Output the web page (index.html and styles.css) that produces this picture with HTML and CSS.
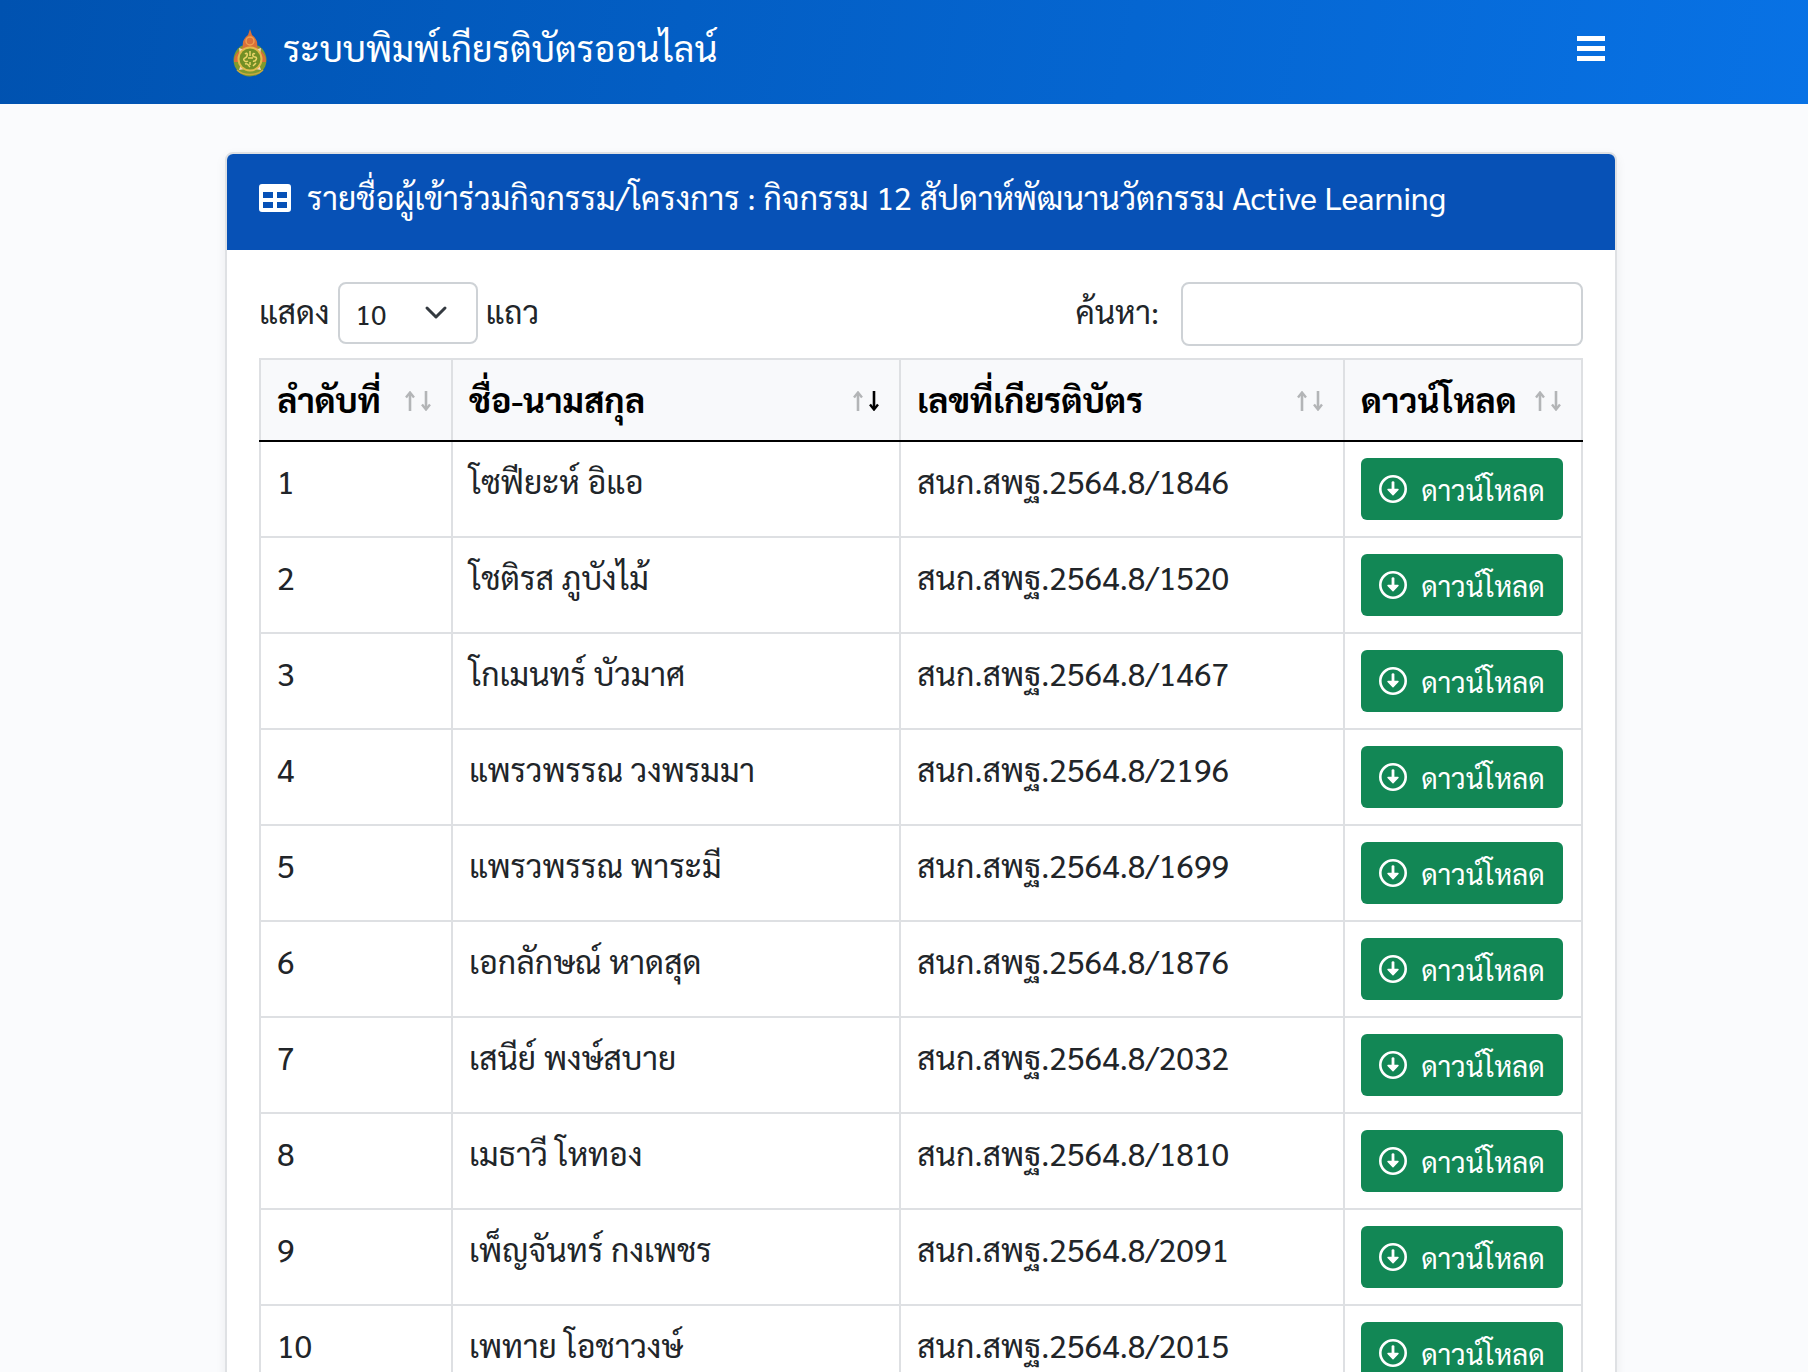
FILE: index.html
```
<!DOCTYPE html>
<html lang="th">
<head>
<meta charset="utf-8">
<meta name="viewport" content="width=device-width, initial-scale=1">
<title>ระบบพิมพ์เกียรติบัตรออนไลน์</title>
<link rel="stylesheet" href="styles.css">
</head>
<body>
<svg class="sprite" aria-hidden="true">
  <symbol id="up" viewBox="0 0 10 20"><path d="M5 20V3" fill="none" stroke="currentColor" stroke-width="2.6"/><path d="M1 6.5l4-5 4 5" fill="none" stroke="currentColor" stroke-width="2.4"/></symbol>
  <symbol id="down" viewBox="0 0 10 20"><path d="M5 0v17" fill="none" stroke="currentColor" stroke-width="2.6"/><path d="M1 13.5l4 5 4-5" fill="none" stroke="currentColor" stroke-width="2.4"/></symbol>
  <symbol id="circle-down" viewBox="0 0 28 28"><circle cx="14" cy="14" r="12.7" fill="none" stroke="currentColor" stroke-width="2.6"/><path d="M14 7.6V18" fill="none" stroke="currentColor" stroke-width="2.8" stroke-linecap="round"/><path d="M9 14.4h10l-5 5.4z" fill="currentColor" stroke="currentColor" stroke-width="1.4" stroke-linejoin="round"/></symbol>
</svg>
<header class="navbar">
  <div class="container navbar-inner">
    <a class="brand" href="#">
      <svg class="logo" viewBox="0 0 34 48" aria-hidden="true">
        <circle cx="17" cy="31" r="16.5" fill="#7f9a2f"/>
        <path d="M17 0l2 6c4 3 6 7 5 11 1 3 3 4 5 6 3 3 4 6 4 10H1c0-4 1-7 4-10 2-2 4-3 5-6-1-4 1-8 5-11z" fill="#d9703a"/>
        <circle cx="17" cy="12" r="4" fill="none" stroke="#f0a050" stroke-width="1.4"/>
        <path d="M6 19l6 2-5 5zM28 19l-6 2 5 5zM6 41l6-1-4-5zM28 41l-6-1 4-5z" fill="#f6d4bd"/>
        <circle cx="17" cy="30" r="12.5" fill="#e2bc4c"/>
        <circle cx="17" cy="30" r="10.5" fill="#728f25"/>
        <path d="M12 25c3-3 3 3 0 4s0 5 3 3M17 22v5M15 29h5M22 25c-3-2-3 3 0 3s1 5-2 4M12 35c3-1 3 1 5 3M17 33v3M20 37l3-3" fill="none" stroke="#ecd568" stroke-width="1.5"/>
        <path d="M4 41c6 6 20 6 26 0" fill="none" stroke="#c8a83d" stroke-width="1.5"/>
      </svg>
      <span>ระบบพิมพ์เกียรติบัตรออนไลน์</span>
    </a>
    <button class="menu" type="button" aria-label="เมนู">
      <svg viewBox="0 0 28 25" width="28" height="25"><path d="M0 0h28v5H0zM0 10h28v5H0zM0 20h28v5H0z" fill="currentColor"/></svg>
    </button>
  </div>
</header>
<main class="container">
  <section class="card">
    <h1 class="card-header">
      <svg class="table-icon" viewBox="0 0 32 28" aria-hidden="true"><path fill="currentColor" fill-rule="evenodd" d="M3 0h26a3 3 0 0 1 3 3v22a3 3 0 0 1-3 3H3a3 3 0 0 1-3-3V3a3 3 0 0 1 3-3zM4 8v6h10V8zM18 8v6h10V8zM4 18v6h10v-6zM18 18v6h10v-6z"/></svg>
      <span>รายชื่อผู้เข้าร่วมกิจกรรม/โครงการ : กิจกรรม 12 สัปดาห์พัฒนานวัตกรรม Active Learning</span>
    </h1>
    <div class="card-body">
      <div class="controls">
        <label class="length">แสดง
          <select class="select"><option>10</option><option>25</option><option>50</option><option>100</option></select>
          แถว</label>
        <label class="search">ค้นหา: <input class="input" type="search"></label>
      </div>
      <table class="table">
        <colgroup><col class="col-no"><col class="col-name"><col class="col-code"><col class="col-dl"></colgroup>
        <thead><tr>
          <th><div class="th"><span>ลำดับที่</span><span class="sort"><svg><use href="#up"/></svg><svg><use href="#down"/></svg></span></div></th>
          <th><div class="th"><span>ชื่อ-นามสกุล</span><span class="sort"><svg><use href="#up"/></svg><svg class="on"><use href="#down"/></svg></span></div></th>
          <th><div class="th"><span>เลขที่เกียรติบัตร</span><span class="sort"><svg><use href="#up"/></svg><svg><use href="#down"/></svg></span></div></th>
          <th><div class="th"><span>ดาวน์โหลด</span><span class="sort"><svg><use href="#up"/></svg><svg><use href="#down"/></svg></span></div></th>
        </tr></thead>
        <tbody>
          <tr><td>1</td><td>โซฟียะห์ อิแอ</td><td>สนก.สพฐ.2564.8/1846</td><td><button class="btn" type="button"><svg class="dl"><use href="#circle-down"/></svg>ดาวน์โหลด</button></td></tr>
          <tr><td>2</td><td>โชติรส ภูบังไม้</td><td>สนก.สพฐ.2564.8/1520</td><td><button class="btn" type="button"><svg class="dl"><use href="#circle-down"/></svg>ดาวน์โหลด</button></td></tr>
          <tr><td>3</td><td>โกเมนทร์ บัวมาศ</td><td>สนก.สพฐ.2564.8/1467</td><td><button class="btn" type="button"><svg class="dl"><use href="#circle-down"/></svg>ดาวน์โหลด</button></td></tr>
          <tr><td>4</td><td>แพรวพรรณ วงพรมมา</td><td>สนก.สพฐ.2564.8/2196</td><td><button class="btn" type="button"><svg class="dl"><use href="#circle-down"/></svg>ดาวน์โหลด</button></td></tr>
          <tr><td>5</td><td>แพรวพรรณ พาระมี</td><td>สนก.สพฐ.2564.8/1699</td><td><button class="btn" type="button"><svg class="dl"><use href="#circle-down"/></svg>ดาวน์โหลด</button></td></tr>
          <tr><td>6</td><td>เอกลักษณ์ หาดสุด</td><td>สนก.สพฐ.2564.8/1876</td><td><button class="btn" type="button"><svg class="dl"><use href="#circle-down"/></svg>ดาวน์โหลด</button></td></tr>
          <tr><td>7</td><td>เสนีย์ พงษ์สบาย</td><td>สนก.สพฐ.2564.8/2032</td><td><button class="btn" type="button"><svg class="dl"><use href="#circle-down"/></svg>ดาวน์โหลด</button></td></tr>
          <tr><td>8</td><td>เมธาวี โหทอง</td><td>สนก.สพฐ.2564.8/1810</td><td><button class="btn" type="button"><svg class="dl"><use href="#circle-down"/></svg>ดาวน์โหลด</button></td></tr>
          <tr><td>9</td><td>เพ็ญจันทร์ กงเพชร</td><td>สนก.สพฐ.2564.8/2091</td><td><button class="btn" type="button"><svg class="dl"><use href="#circle-down"/></svg>ดาวน์โหลด</button></td></tr>
          <tr><td>10</td><td>เพทาย โอชาวงษ์</td><td>สนก.สพฐ.2564.8/2015</td><td><button class="btn" type="button"><svg class="dl"><use href="#circle-down"/></svg>ดาวน์โหลด</button></td></tr>
        </tbody>
      </table>
    </div>
  </section>
</main>
</body>
</html>
```
FILE: styles.css
```
* { box-sizing: border-box; }
body {
  margin: 0;
  background: #fafbfd;
  color: #212529;
  font-family: Sarabun, "Noto Sans Thai Looped", "Noto Looped Thai", "Open Sans", "Noto Sans Thai", sans-serif;
  font-size: 32px;
  font-weight: 400;
  line-height: 46px;
}
.sprite { display: none; }
.navbar {
  height: 104px;
  background: linear-gradient(100deg, #0052b0, #0872e5);
  color: #fff;
  padding-left: 34px;
}
main { padding-left: 34px; }
.container { max-width: 1392px; margin: 0 auto; }
main.container { max-width: 1426px; margin-top: 48px; }
.navbar-inner { display: flex; justify-content: space-between; padding: 24px 12px 0 8px; }
.brand { display: flex; gap: 16px; color: inherit; text-decoration: none; font-size: 36px; }
.logo { width: 34px; height: 48px; margin-top: 5px; flex: none; }
.menu { height: 48px; border: 0; padding: 0; background: none; color: inherit; }
.menu svg { display: block; }
.card { background: #fff; border: 2px solid #dfe1e4; border-radius: 8px; box-shadow: 0 4px 12px rgba(0, 0, 0, .06); }
.card-header {
  display: flex;
  gap: 16px;
  margin: 0;
  padding: 20px 32px 30px;
  border-radius: 6px 6px 0 0;
  background: #0751b6;
  color: #fff;
  font-size: 32px;
  font-weight: 400;
  white-space: nowrap;
}
.table-icon { width: 32px; height: 28px; margin-top: 10px; flex: none; }
.card-body { padding: 32px; }
.controls { display: flex; justify-content: space-between; align-items: flex-start; margin-bottom: 12px; line-height: 58px; }
.length, .search { display: flex; align-items: flex-start; gap: 8px; }
.search { gap: 22px; }
.select {
  width: 140px;
  height: 62px;
  padding: 0 16px 4px;
  border: 2px solid #ced2d6;
  border-radius: 8px;
  appearance: none;
  color: inherit;
  font: inherit;
  font-size: 28px;
  background: #fff url("data:image/svg+xml,%3Csvg xmlns='http://www.w3.org/2000/svg' viewBox='0 0 24 16'%3E%3Cpath d='M3 3l9 9 9-9' fill='none' stroke='%23343a40' stroke-width='3' stroke-linecap='round' stroke-linejoin='round'/%3E%3C/svg%3E") no-repeat right 28px center / 24px 16px;
}
.input { width: 402px; height: 64px; border: 2px solid #ced2d6; border-radius: 8px; background: #fff; font: inherit; padding: 0 16px; }
.table { width: 100%; table-layout: fixed; border-collapse: collapse; }
.col-no { width: 192px; }
.col-name { width: 448px; }
.col-dl { width: 238px; }
.table th, .table td { border: 2px solid #dee0e3; padding: 16px; text-align: left; vertical-align: top; white-space: nowrap; }
.table th { padding-bottom: 18px; background: #f8f9fb; color: #000; font-size: 34px; font-weight: 700; border-bottom-color: #000; }
.th { display: flex; justify-content: space-between; align-items: center; }
.sort { display: flex; gap: 6px; color: #b3b5b7; margin: 4px 4px 0 0; }
.sort svg { width: 10px; height: 20px; }
.sort .on { color: #000; }
.btn {
  display: flex;
  align-items: center;
  justify-content: center;
  gap: 14px;
  width: 202px;
  height: 62px;
  padding: 0 0 1px;
  border: 0;
  border-radius: 6px;
  background: #128755;
  color: #fff;
  font: inherit;
  font-size: 28px;
}
.dl { width: 28px; height: 28px; flex: none; }
```
